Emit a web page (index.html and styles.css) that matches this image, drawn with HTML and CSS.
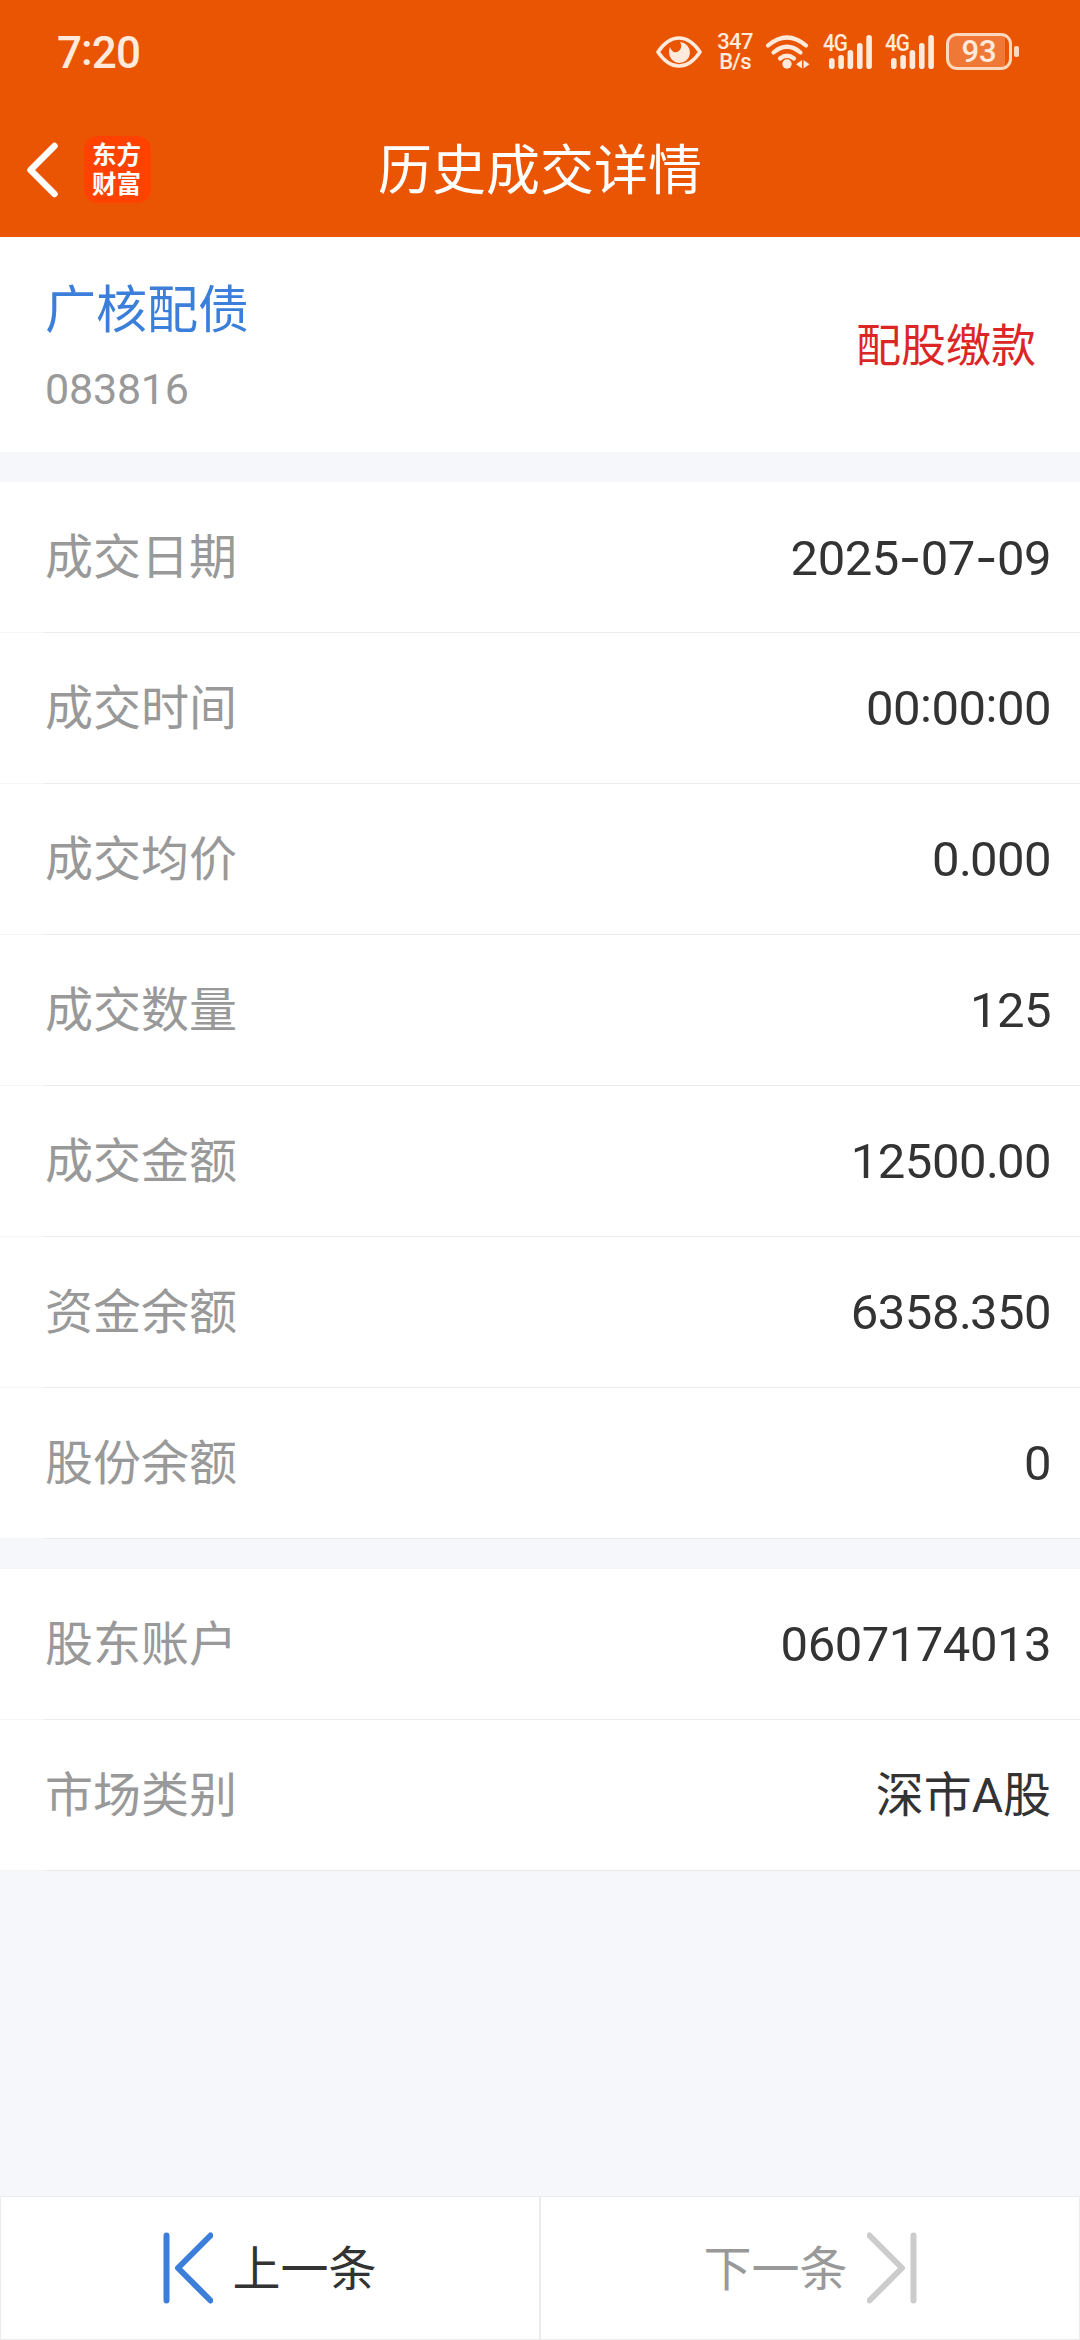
FILE: index.html
```html
<!DOCTYPE html>
<html lang="zh-CN">
<head>
<meta charset="utf-8">
<title>历史成交详情</title>
<link rel="stylesheet" href="styles.css">
</head>
<body>
<div class="page">
  <header class="header">
    <div class="status">
      <span class="clock">7<span class="colon">:</span>20</span>
      <div class="status-icons">
        <svg class="eye" width="46" height="32" viewBox="0 0 46 32">
          <path d="M2 16C8 7 15 2 23 2s15 5 21 14c-6 9-13 14-21 14S8 25 2 16z" fill="none" stroke="currentColor" stroke-width="3.600" stroke-linejoin="round"/>
          <path d="M24 6A10.500 10.500 0 1 1 13 16a11 11 0 0 1 1-5c1 4 4 6 7 5s6-5 3-10z" fill="currentColor"/>
        </svg>
        <div class="speed"><span>347</span><span>B/s</span></div>
        <svg class="wifi" width="46" height="34" viewBox="0 0 46 34">
          <g fill="none" stroke="currentColor" stroke-width="4.200" stroke-linecap="round">
            <path d="M3 10.500Q22 -5.500 41 10.500"/>
            <path d="M8.500 17.500Q22 6 35.500 17.500"/>
            <path d="M15 23.500Q22 18 29 23.500"/>
          </g>
          <circle cx="22" cy="29" r="4.700" fill="currentColor"/>
          <path d="M37 25v8.500l-6-4.200zM38.500 25v8.500l6-4.200z" fill="currentColor"/>
        </svg>
        <div class="signal">
          <span class="net">4G</span>
          <svg width="44" height="34" viewBox="0 0 44 34" fill="currentColor">
            <rect x="0" y="23" width="5.600" height="11" rx="2.800"/><rect x="9.300" y="20" width="5.600" height="14" rx="2.800"/><rect x="18.600" y="15" width="5.600" height="19" rx="2.800"/><rect x="28" y="8" width="5.600" height="26" rx="2.800"/><rect x="37.300" y="0" width="5.600" height="34" rx="2.800"/>
          </svg>
        </div>
        <div class="signal">
          <span class="net">4G</span>
          <svg width="44" height="34" viewBox="0 0 44 34" fill="currentColor">
            <rect x="0" y="23" width="5.600" height="11" rx="2.800"/><rect x="9.300" y="20" width="5.600" height="14" rx="2.800"/><rect x="18.600" y="15" width="5.600" height="19" rx="2.800"/><rect x="28" y="8" width="5.600" height="26" rx="2.800"/><rect x="37.300" y="0" width="5.600" height="34" rx="2.800"/>
          </svg>
        </div>
        <div class="battery"><span>93</span></div>
        <i class="battery-tip"></i>
      </div>
    </div>
    <nav class="nav">
      <svg width="32" height="56" viewBox="0 0 32 56" fill="none" stroke="#fff" stroke-width="6.500" stroke-linecap="round" stroke-linejoin="round"><path d="M28.500 4L4.500 28l24 24"/></svg>
      <div class="logo"><span>东方</span><span>财富</span></div>
      <h1 class="title">历史成交详情</h1>
    </nav>
  </header>

  <section class="stock">
    <div>
      <div class="stock-name">广核配债</div>
      <div class="stock-code">083816</div>
    </div>
    <div class="stock-type">配股缴款</div>
  </section>

  <dl class="rows">
    <div class="row"><dt>成交日期</dt><dd>2025<span class="dash">-</span>07<span class="dash">-</span>09</dd></div>
    <div class="row"><dt>成交时间</dt><dd>00<span class="colon">:</span>00<span class="colon">:</span>00</dd></div>
    <div class="row"><dt>成交均价</dt><dd>0<span class="dot">.</span>000</dd></div>
    <div class="row"><dt>成交数量</dt><dd>125</dd></div>
    <div class="row"><dt>成交金额</dt><dd>12500<span class="dot">.</span>00</dd></div>
    <div class="row"><dt>资金余额</dt><dd>6358<span class="dot">.</span>350</dd></div>
    <div class="row"><dt>股份余额</dt><dd>0</dd></div>
  </dl>

  <dl class="rows">
    <div class="row"><dt>股东账户</dt><dd>0607174013</dd></div>
    <div class="row"><dt>市场类别</dt><dd class="market">深市A股</dd></div>
  </dl>

  <footer class="pager">
    <div class="pager-item">
      <svg width="50" height="72" viewBox="0 0 50 72" fill="none" stroke="#3b7fdb" stroke-width="6" stroke-linecap="round" stroke-linejoin="round"><path d="M3.500 3.500v65M47.500 3.500L15 36l32.500 32.500"/></svg>
      <span>上一条</span>
    </div>
    <div class="pager-item disabled">
      <span>下一条</span>
      <svg width="50" height="72" viewBox="0 0 50 72" fill="none" stroke="#ccc" stroke-width="6" stroke-linecap="round" stroke-linejoin="round"><path d="M46.500 3.500v65M2.500 3.500L35 36 2.500 68.500"/></svg>
    </div>
  </footer>
</div>
</body>
</html>
```

FILE: styles.css
```css
* { box-sizing: border-box; }

body {
  margin: 0;
  font-family: Roboto, "Noto Sans CJK SC", sans-serif;
  color: #333;
  background: #f6f7fa;
}

.page {
  width: 1080px;
  height: 2340px;
  display: flex;
  flex-direction: column;
  background: #f6f7fa;
}

.header {
  height: 237px;
  background: #ea5504;
  color: #fff;
}

.status {
  height: 103px;
  padding: 0 61px 0 57px;
  display: flex;
  align-items: center;
  justify-content: space-between;
  color: #ffeadb;
}

.clock {
  padding-top: 2px;
  font-size: 44px;
  font-weight: 500;
  line-height: 52px;
  letter-spacing: -0.900px;
}

.colon {
  position: relative;
  top: -3px;
}

.status-icons {
  display: flex;
  align-items: center;
}

.speed {
  width: 36px;
  margin-left: 15px;
  display: flex;
  flex-direction: column;
  align-items: center;
  font-size: 22px;
  font-weight: 500;
  line-height: 20px;
  letter-spacing: -0.700px;
}

.wifi { margin-left: 12px; }

.signal {
  position: relative;
  width: 50px;
  height: 34px;
  margin-left: 12px;
  display: flex;
  justify-content: flex-end;
}

.net {
  position: absolute;
  left: 0;
  top: 0;
  font-size: 23px;
  font-weight: 500;
  line-height: 17px;
  letter-spacing: -1px;
  transform: scaleX(0.9);
  transform-origin: left;
}

.battery {
  width: 66px;
  height: 37px;
  margin-left: 11px;
  border: 3px solid #ffd9bd;
  border-radius: 11px;
  background: linear-gradient(90deg, #f07837 93%, #ea5504 93%);
  display: flex;
  align-items: center;
  justify-content: center;
  font-size: 31px;
  font-weight: 500;
  line-height: 30px;
}

.battery-tip {
  width: 5px;
  height: 11px;
  margin-left: 2px;
  border-radius: 2px;
  background: #ffd9bd;
}

.nav {
  position: relative;
  height: 134px;
  padding: 0 0 1px 26px;
  display: flex;
  align-items: center;
}

.logo {
  width: 67px;
  height: 67px;
  margin-left: 26px;
  padding-right: 2px;
  border-radius: 14px;
  background: #ff4200;
  display: flex;
  flex-direction: column;
  align-items: center;
  justify-content: center;
  font-size: 24.500px;
  font-weight: 700;
  line-height: 29px;
}

.title {
  position: absolute;
  left: 0;
  right: 0;
  margin: 0;
  padding-top: 5px;
  text-align: center;
  font-size: 54px;
  font-weight: 400;
  line-height: 80px;
}

.stock {
  height: 215px;
  padding: 0 44px 0 45px;
  display: flex;
  justify-content: space-between;
  align-items: center;
  background: #fff;
}

.stock-name {
  padding-top: 2px;
  font-size: 51px;
  line-height: 76px;
  color: #3b7fdb;
}

.stock-code {
  margin-top: 10px;
  font-size: 43px;
  line-height: 60px;
  letter-spacing: -0.200px;
  color: #999;
}

.stock-type {
  padding-top: 4px;
  font-size: 45px;
  line-height: 66px;
  color: #dc2626;
}

.rows {
  margin: 30px 0 0;
  background: #fff;
}

.row {
  height: 151px;
  padding: 1px 29px 0 45px;
  display: flex;
  align-items: center;
  justify-content: space-between;
  background: linear-gradient(90deg, #f6f6f6 45px, #ebebeb 45px) bottom / 100% 1px no-repeat;
}

dt {
  font-size: 48px;
  line-height: 70px;
  color: #999;
}

dd {
  margin: 0;
  font-size: 49px;
  line-height: 70px;
  letter-spacing: -0.500px;
}

.market {
  font-size: 48px;
  letter-spacing: 0;
}

.dash { font-family: Inter, sans-serif; }

.dot { letter-spacing: -2px; }

.pager {
  height: 144px;
  margin-top: auto;
  display: grid;
  grid-template-columns: 1fr 1fr;
}

.pager-item {
  border: 1px solid #ebebeb;
  background: #fff;
  display: flex;
  align-items: center;
  justify-content: center;
  gap: 19px;
  font-size: 48px;
  line-height: 70px;
}

.pager-item span { padding-top: 3px; }

.disabled { color: #999; }
```
